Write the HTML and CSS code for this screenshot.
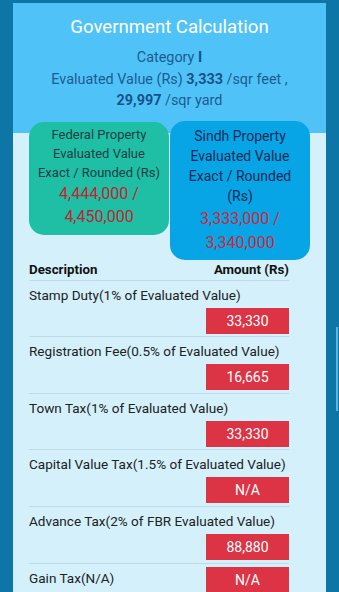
FILE: index.html
```html
<!DOCTYPE html>
<html>
<head>
<meta charset="utf-8">
<link rel="stylesheet" href="styles.css">
</head>
<body>
<div class="card">
  <div class="head">
    <div class="title">Government Calculation</div>
    <div class="sub">
      <div>Category <b>I</b></div>
      <div>Evaluated Value (Rs) <b>3,333</b> /sqr feet ,</div>
      <div><b>29,997</b> /sqr yard</div>
    </div>
  </div>
  <div class="boxes">
    <div class="box fed">
      <div class="box-label">Federal Property<br>Evaluated Value<br>Exact / Rounded (Rs)</div>
      <div class="box-num">4,444,000 /<br>4,450,000</div>
    </div>
    <div class="box sindh">
      <div class="box-label">Sindh Property<br>Evaluated Value<br>Exact / Rounded<br>(Rs)</div>
      <div class="box-num">3,333,000 /<br>3,340,000</div>
    </div>
  </div>
  <div class="table">
    <div class="thead"><span>Description</span><span>Amount (Rs)</span></div>
    <div class="row"><span class="label">Stamp Duty(1% of Evaluated Value)</span><span class="amt">33,330</span></div>
    <div class="row"><span class="label">Registration Fee(0.5% of Evaluated Value)</span><span class="amt">16,665</span></div>
    <div class="row"><span class="label">Town Tax(1% of Evaluated Value)</span><span class="amt">33,330</span></div>
    <div class="row"><span class="label">Capital Value Tax(1.5% of Evaluated Value)</span><span class="amt">N/A</span></div>
    <div class="row"><span class="label">Advance Tax(2% of FBR Evaluated Value)</span><span class="amt">88,880</span></div>
    <div class="row"><span class="label">Gain Tax(N/A)</span><span class="amt">N/A</span></div>
  </div>
</div>
<div class="scrollbar"></div>
</body>
</html>
```

FILE: styles.css
```css
html, body {
  margin: 0;
  padding: 0;
  height: 100%;
  overflow: hidden;
}
body {
  background: #0d76a7;
  font-family: Roboto, "Noto Sans", sans-serif;
  position: relative;
}
.card {
  margin: 3px 13px 0;
  width: 313px;
  min-height: 600px;
  background: linear-gradient(#4fc3f7 0, #4fc3f7 130px, #d4f1fb 130px);
}
.head {
  padding: 12px 16px 0;
  text-align: center;
}
.title {
  color: #fff;
  font-size: 18.6px;
  line-height: 24px;
}
.sub {
  margin-top: 8px;
  font-size: 14.4px;
  line-height: 21.5px;
  color: #1d5b93;
}
.sub b {
  color: #17518a;
}
.boxes {
  display: flex;
  align-items: flex-start;
  gap: 1px;
  padding: 0 16px;
  margin-top: 9px;
}
.box {
  width: 140px;
  border-radius: 15px;
  text-align: center;
  box-sizing: border-box;
}
.fed {
  background: #1ebfa5;
  color: #1f3d47;
  padding: 3px 4px 7px;
  margin-top: 1px;
}
.fed .box-label {
  font-size: 13px;
  line-height: 19px;
}
.fed .box-num {
  font-size: 16px;
  line-height: 23px;
  color: #c3242f;
}
.sindh {
  background: #07a5e6;
  color: #0c2a55;
  padding: 5px 4px 5px;
}
.sindh .box-label {
  font-size: 14px;
  line-height: 20.3px;
}
.sindh .box-num {
  font-size: 16px;
  line-height: 24px;
  color: #c92a3c;
}
.table {
  margin: 0 37px 0 16px;
}
.thead {
  display: flex;
  justify-content: space-between;
  font-size: 13.3px;
  font-weight: bold;
  line-height: 20px;
  color: #111;
  border-bottom: 1px solid #bcdbe7;
}
.row {
  display: flex;
  flex-wrap: wrap;
  align-items: flex-start;
  padding: 3px 0 2.6px;
  border-bottom: 1px solid #bcdbe7;
}
.label {
  font-size: 13.55px;
  line-height: 20px;
  color: #222;
  margin: 1px 0 3px;
  white-space: nowrap;
}
.amt {
  margin-left: auto;
  width: 83px;
  height: 26px;
  line-height: 26px;
  text-align: center;
  color: #fff;
  font-size: 14px;
  background: #dc3444;
}
.scrollbar {
  position: absolute;
  right: 1px;
  top: 327px;
  width: 2px;
  height: 84px;
  background: #5db3da;
}
```
